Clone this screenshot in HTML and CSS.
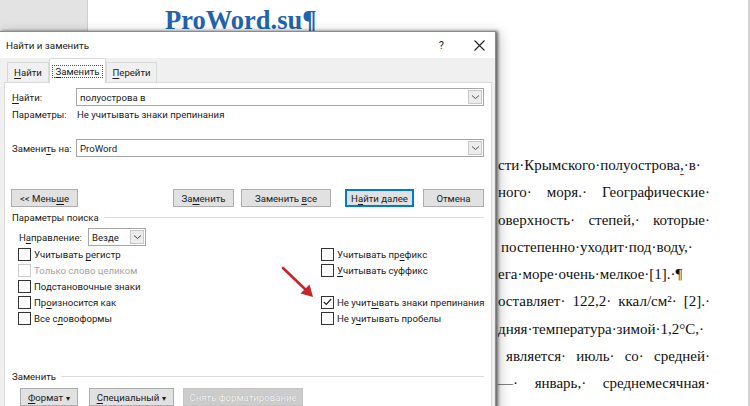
FILE: index.html
```html
<!DOCTYPE html>
<html>

<head>
	<meta charset="utf-8">
	<title>Найти и заменить</title>
	<link rel="stylesheet" href="styles.css">
</head>

<body>
	<div class="workspace">
		<div class="gutter"></div>
		<div class="page">
			<h1 class="doc-hed">ProWord.su¶</h1>
			<div class="doc-text">
				<p class="ln">сти·Крымского·полуострова<span class="squiggle">,</span>·в·</p>
				<p class="ln">ного· моря.· Географические·</p>
				<p class="ln">оверхность· степей,· которые·</p>
				<p class="ln ln-in">постепенно·уходит·под·воду,·</p>
				<p class="ln ln-end">ега·море·очень·мелкое·[1].·¶</p>
				<p class="ln">оставляет· 122,2· ккал/см²· [2].·</p>
				<p class="ln">дняя·температура·зимой·1,2°С,·</p>
				<p class="ln ln-in2">является· июль· со· средней·</p>
				<p class="ln">—· январь,· среднемесячная·</p>
			</div>
		</div>
	</div>

	<div class="dialog">
		<div class="dlg-title">
			<span class="dlg-caption">Найти и заменить</span>
			<span class="dlg-help">?</span>
			<svg class="dlg-close" width="11" height="11" viewBox="0 0 11 11">
				<path d="M0.5 0.5L10.5 10.5M10.5 0.5L0.5 10.5" stroke="#222" stroke-width="1.1" fill="none" />
			</svg>
		</div>

		<div class="tabs">
			<span class="tab"><span><u>Н</u>айти</span></span>
			<span class="tab tab-active"><span class="focus"><u>З</u>аменить</span></span>
			<span class="tab"><span><u>П</u>ерейти</span></span>
		</div>

		<div class="panel">
			<div class="field">
				<span class="field-label"><u>Н</u>айти:</span>
				<div class="combo">
					<span class="combo-value">полуострова в</span>
					<span class="combo-btn">
						<svg width="9" height="6" viewBox="0 0 9 6">
							<path d="M1 1.5L4.5 4.5L8 1.5" stroke="#555" stroke-width="1" fill="none" />
						</svg>
					</span>
				</div>
			</div>
			<div class="note">
				<span class="field-label">Параметры:</span>
				<span>Не учитывать знаки препинания</span>
			</div>
			<div class="field field-replace">
				<span class="field-label">Замени<u>т</u>ь на:</span>
				<div class="combo">
					<span class="combo-value">ProWord</span>
					<span class="combo-btn">
						<svg width="9" height="6" viewBox="0 0 9 6">
							<path d="M1 1.5L4.5 4.5L8 1.5" stroke="#555" stroke-width="1" fill="none" />
						</svg>
					</span>
				</div>
			</div>

			<div class="actions">
				<span class="btn btn-less"><span>&lt;&lt; Мень<u>ш</u>е</span></span>
				<span class="btn btn-replace"><span>За<u>м</u>енить</span></span>
				<span class="btn btn-all"><span>Заменить <u>в</u>се</span></span>
				<span class="btn btn-next"><span>Н<u>а</u>йти далее</span></span>
				<span class="btn btn-cancel"><span>Отмена</span></span>
			</div>

			<div class="group">Параметры поиска</div>

			<div class="direction">
				<span class="direction-label">Н<u>а</u>правление:</span>
				<div class="select">
					<span class="select-value">Везде</span>
					<span class="select-btn">
						<svg width="9" height="6" viewBox="0 0 9 6">
							<path d="M1 1.5L4.5 4.5L8 1.5" stroke="#444" stroke-width="1" fill="none" />
						</svg>
					</span>
				</div>
			</div>

			<div class="options">
				<label class="opt"><span class="box"></span><span>Учитывать <u>р</u>егистр</span></label>
				<label class="opt"><span class="box"></span><span>Учитывать пр<u>е</u>фикс</span></label>
				<label class="opt opt-off"><span class="box"></span><span>Только слово целиком</span></label>
				<label class="opt"><span class="box"></span><span><u>У</u>читывать суффикс</span></label>
				<label class="opt"><span class="box"></span><span>Подстановочные знаки</span></label>
				<span></span>
				<label class="opt"><span class="box"></span><span>Пр<u>о</u>износится как</span></label>
				<label class="opt"><span class="box box-on">
						<svg width="9" height="8" viewBox="0 0 9 8">
							<path d="M0.8 4L3.3 6.5L8.2 1" stroke="#222" stroke-width="1.2" fill="none" />
						</svg>
					</span><span>Не учит<u>ы</u>вать знаки препинания</span></label>
				<label class="opt"><span class="box"></span><span>Все с<u>л</u>овоформы</span></label>
				<label class="opt"><span class="box"></span><span>Не у<u>ч</u>итывать пробелы</span></label>
			</div>

			<div class="group group-replace">Заменить</div>

			<div class="bottom-actions">
				<span class="btn btn-format"><span><u>Ф</u>ормат<span class="caret">▾</span></span></span>
				<span class="btn btn-special"><span><u>С</u>пециальный<span class="caret">▾</span></span></span>
				<span class="btn btn-clear"><span>Снять форматирование</span></span>
			</div>
		</div>
	</div>

	<!-- red pointer drawn over the screenshot -->
	<svg class="pointer" width="40" height="40" viewBox="0 0 40 40">
		<path d="M5 6L28 28" stroke="#c4262b" stroke-width="2.6" stroke-linecap="round" fill="none" />
		<path d="M35 35L31.5 22.5L22.5 31.5Z" fill="#c4262b" />
	</svg>
</body>

</html>
```

FILE: styles.css
```css
/* word window behind the dialog */

* {
	box-sizing: border-box;
}

html,
body {
	margin: 0;
	padding: 0;
	width: 750px;
	height: 406px;
	overflow: hidden;
	background: #d4d4d4;
}

p,
h1 {
	margin: 0;
}

.workspace {
	display: flex;
	height: 406px;
}

.gutter {
	width: 88px;
	background: #e3e3e3;
	border-right: 1px solid #cfcfcf;
}

.page {
	width: 660px;
	background: #fff;
}

.doc-hed {
	padding: 5px 0 0 77px;
	font-family: 'Liberation Serif', serif;
	font-size: 26.5px;
	line-height: 30px;
	font-weight: bold;
	color: #1f64ad;
}

.doc-text {
	margin: 117px 0 0 410px;
	width: 212px;
	font-family: 'Liberation Serif', serif;
	font-size: 15px;
	line-height: 27.25px;
	color: #111;
}

.ln {
	text-align: justify;
	text-align-last: justify;
	white-space: nowrap;
}

.ln-in {
	padding-left: 3px;
}

.ln-in2 {
	padding-left: 8px;
}

.ln-end {
	text-align-last: left;
}

.squiggle {
	text-decoration: underline;
	text-decoration-color: #b5332e;
	text-underline-offset: 4px;
}

/* dialog */

.dialog {
	position: absolute;
	left: -1px;
	top: 31px;
	width: 497px;
	height: 390px;
	overflow: hidden;
	background: #f0f0f0;
	border: 1px solid #8c8c8c;
	box-shadow: 2px 0 3px rgba(0, 0, 0, 0.55), 4px 2px 12px rgba(0, 0, 0, 0.22);
	font-family: Roboto, 'Noto Sans', sans-serif;
	font-size: 9.6px;
	color: #1a1a1a;
	white-space: nowrap;
}

.dialog u {
	text-decoration-thickness: 1px;
	text-underline-offset: 1.5px;
}

.dlg-title {
	display: flex;
	align-items: center;
	height: 26px;
	padding: 0 10px 0 6px;
	background: #fff;
}

.dlg-caption {
	font-size: 9.8px;
	flex: 1;
}

.dlg-help {
	font-size: 11px;
	margin-right: 30px;
}

.tabs {
	display: flex;
	align-items: flex-end;
	height: 24px;
	padding-left: 7px;
}

.tab {
	display: flex;
	align-items: center;
	justify-content: center;
	height: 20px;
	width: 42px;
	border: 1px solid #d9d9d9;
	border-bottom: none;
	background: #f0f0f0;
}

.tab-active {
	position: relative;
	z-index: 1;
	width: 57px;
	height: 25px;
	margin: 0 0 -1px 0;
	background: #fff;
}

.tab:last-child {
	width: 51px;
}

.focus {
	padding: 0 2px;
	border: 1px dotted #555;
}

.panel {
	margin-left: 4px;
	width: 488px;
	height: 330px;
	padding: 5px 7px 0 7px;
	background: #fff;
	border: 1px solid #d9d9d9;
}

.field {
	display: flex;
	align-items: center;
	height: 18px;
}

.field-label {
	width: 64px;
	flex: none;
}

.combo {
	display: flex;
	align-items: center;
	width: 408px;
	height: 18px;
	padding: 0 1px 0 3px;
	border: 1px solid #a6a6a6;
}

.combo-value {
	flex: 1;
}

.combo-btn,
.select-btn {
	display: flex;
	align-items: center;
	justify-content: center;
	width: 14px;
	height: 14px;
	background: #ececec;
	border: 1px solid #c8c8c8;
}

.note {
	display: flex;
	align-items: center;
	height: 12px;
	margin-top: 2px;
}

.note .field-label {
	width: 65px;
}

.field-replace {
	margin-top: 19px;
}

.actions {
	display: flex;
	margin: 32px 0 0 -1px;
}

.btn {
	display: flex;
	align-items: center;
	justify-content: center;
	height: 18px;
	background: #e1e1e1;
	border: 1px solid #adadad;
}

.btn-less {
	width: 67px;
}

.btn-replace {
	width: 61px;
	margin-left: auto;
}

.btn-all {
	width: 90px;
	margin-left: 7px;
}

.btn-next {
	width: 69px;
	margin-left: 14px;
	border-color: #0078d7;
	box-shadow: inset 0 0 0 1px #0078d7;
}

.btn-cancel {
	width: 61px;
	margin-left: 9px;
}

.group {
	display: flex;
	align-items: center;
	height: 14px;
	margin-top: 3px;
}

.group::after {
	content: '';
	flex: 1;
	margin-left: 5px;
	border-top: 1px solid #dcdcdc;
}

.direction {
	display: flex;
	align-items: center;
	height: 18px;
	margin: 4px 0 0 7px;
}

.direction-label {
	width: 69px;
}

.select {
	display: flex;
	align-items: center;
	width: 58px;
	height: 18px;
	padding: 0 1px 0 3px;
	border: 1px solid #a6a6a6;
}

.select-value {
	flex: 1;
}

.options {
	display: grid;
	grid-template-columns: 303px auto;
	grid-auto-rows: 16px;
	margin-left: 6px;
}

.opt {
	display: flex;
	align-items: center;
}

.box {
	display: flex;
	align-items: center;
	justify-content: center;
	width: 13px;
	height: 13px;
	margin-right: 3px;
	background: #fff;
	border: 1px solid #333;
}

.opt-off {
	color: #a3a3a3;
}

.opt-off .box {
	border-color: #cccccc;
}

.group-replace {
	margin-top: 43px;
}

.bottom-actions {
	display: flex;
	margin: 5px 0 0 8px;
}

.btn-format {
	width: 58px;
}

.btn-special {
	width: 85px;
	margin-left: 11px;
}

.btn-clear {
	width: 120px;
	margin-left: 9px;
	background: #cccccc;
	border-color: #c4c4c4;
	color: #f4f4f4;
	text-shadow: 0 0 1px #9a9a9a;
}

.caret {
	margin-left: 3px;
	font-size: 8px;
}

.pointer {
	position: absolute;
	left: 278px;
	top: 262px;
}
```
